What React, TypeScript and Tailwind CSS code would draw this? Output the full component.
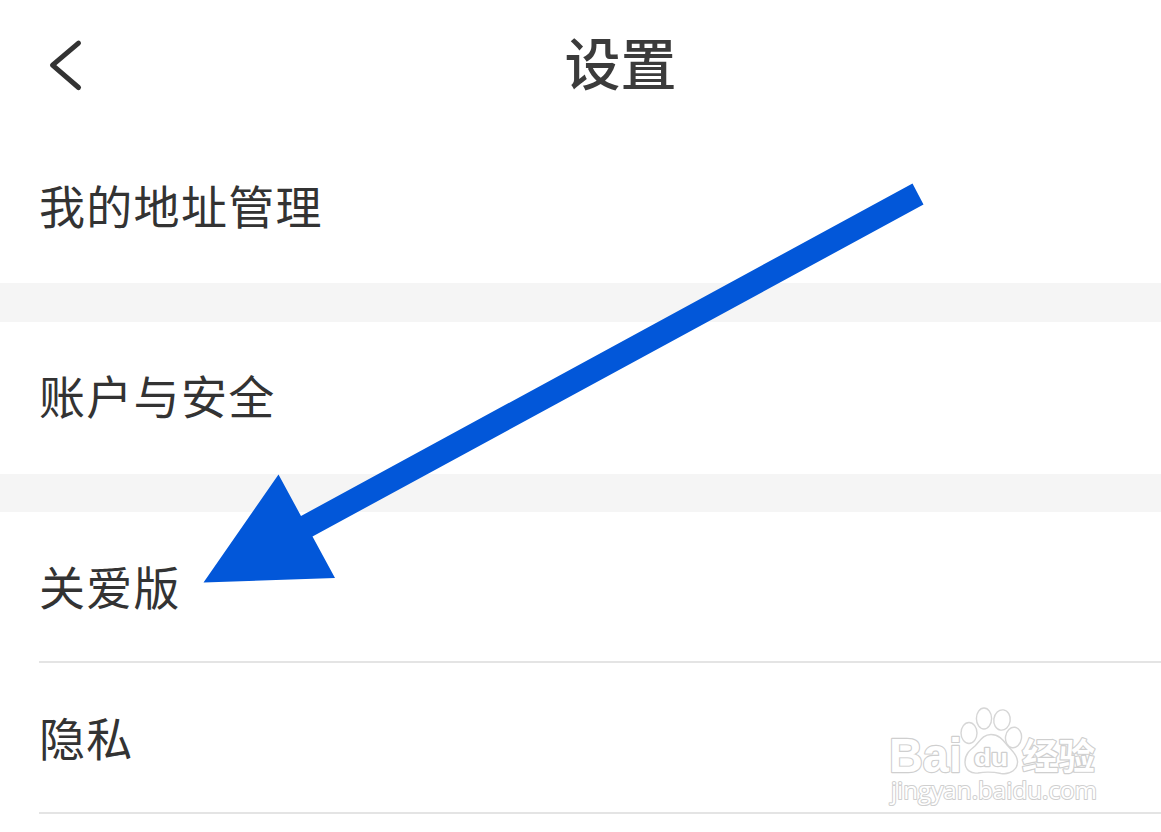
import React from 'react';

interface RowProps {
  label: string;
  divider?: boolean;
}

const SettingRow: React.FC<RowProps> = ({ label, divider }) => (
  <div className={divider ? 'ml-[39px] h-[151px] pb-1 border-b-2 border-[#e4e4e4] flex items-center' : 'ml-[39px] h-[151px] pb-[7px] flex items-center'}>
    <span className="text-[46px] leading-none tracking-[1.3px] text-[#333333]">{label}</span>
  </div>
);

const Arrow = () => (
  <svg className="absolute left-[200px] top-[180px]" width="730" height="408" viewBox="200 180 730 408">
    <path d="M912.5 183.5 923.5 204.5 312.5 536.5 335 578 203.5 582.5 278.5 474.5 301 516Z" fill="#0257d9" />
  </svg>
);

interface OutlineTextProps {
  x: number;
  y: number;
  size: number;
  width: number;
  weight: number;
  edge: number;
  family: string;
  children: string;
}

// White lettering with a thin grey edge
const OutlineText: React.FC<OutlineTextProps> = ({ x, y, size, width, weight, edge, family, children }) => (
  <text x={x} y={y} fontSize={size} fontWeight={weight} fontFamily={family} textLength={width} lengthAdjust="spacingAndGlyphs" fill="#ffffff" stroke="#cfcfcf" strokeWidth={edge} strokeLinejoin="round" paintOrder="stroke">
    {children}
  </text>
);

const LATIN = '"Liberation Sans", sans-serif';
const HUMANIST = '"Open Sans", sans-serif';
const HAN = '"Noto Sans CJK SC", sans-serif';

const Watermark = () => (
  <svg className="absolute left-[880px] top-[700px]" width="230" height="112" viewBox="880 700 230 112">
    <g fill="#ffffff" stroke="#d6d6d6" strokeWidth="1.4">
      <ellipse cx="969" cy="733" rx="8" ry="10.5" />
      <ellipse cx="984" cy="718.5" rx="7.6" ry="10.5" />
      <ellipse cx="1002" cy="720" rx="8.2" ry="10.2" transform="rotate(8 1002 720)" />
      <ellipse cx="1013.5" cy="737.5" rx="8" ry="10.3" transform="rotate(8 1013.5 737.5)" />
      <path d="M991 734.5C983 734.5 980 741 975 746C970 750 965 754 965 762C965 770 971 774 978 773C986 771.5 994 772 1001 773.5C1011 775 1018 769 1017.5 761C1017 754 1011 750 1007 745C1003 740 999 734.5 991 734.5Z" />
    </g>
    <OutlineText x={889} y={772} size={49} width={73} weight={700} edge={2.4} family={LATIN}>Bai</OutlineText>
    <OutlineText x={974} y={766} size={24} width={34} weight={700} edge={2.4} family={LATIN}>du</OutlineText>
    <OutlineText x={1022} y={769.5} size={36} width={73} weight={700} edge={2.4} family={HAN}>经验</OutlineText>
    <OutlineText x={891} y={799} size={23.5} width={206} weight={400} edge={2} family={HUMANIST}>jingyan.baidu.com</OutlineText>
  </svg>
);

const App: React.FC = () => {
  return (
    <div className="relative w-[1161px] h-[832px] overflow-hidden bg-white font-['Noto_Sans_CJK_SC',sans-serif]">
      <header className="h-[132px] grid grid-cols-3 items-center">
        <svg className="ml-[46px]" width="40" height="56" viewBox="0 0 40 56" fill="none" stroke="#333333" strokeWidth="5" strokeLinecap="round" strokeLinejoin="round">
          <path d="M32.5 5.2 6.5 27.2 32.5 49.5" />
        </svg>
        <h1 className="ml-[80px] pb-[10px] justify-self-center text-[56px] leading-none font-medium text-[#3b3b3b]">设置</h1>
      </header>

      <SettingRow label="我的地址管理" />
      <div className="h-[39px] bg-[#f5f5f5]" />
      <SettingRow label="账户与安全" />
      <div className="mt-px h-[38px] bg-[#f5f5f5]" />
      <SettingRow label="关爱版" divider />
      <SettingRow label="隐私" divider />

      <Watermark />
      <Arrow />
    </div>
  );
};

export default App;
